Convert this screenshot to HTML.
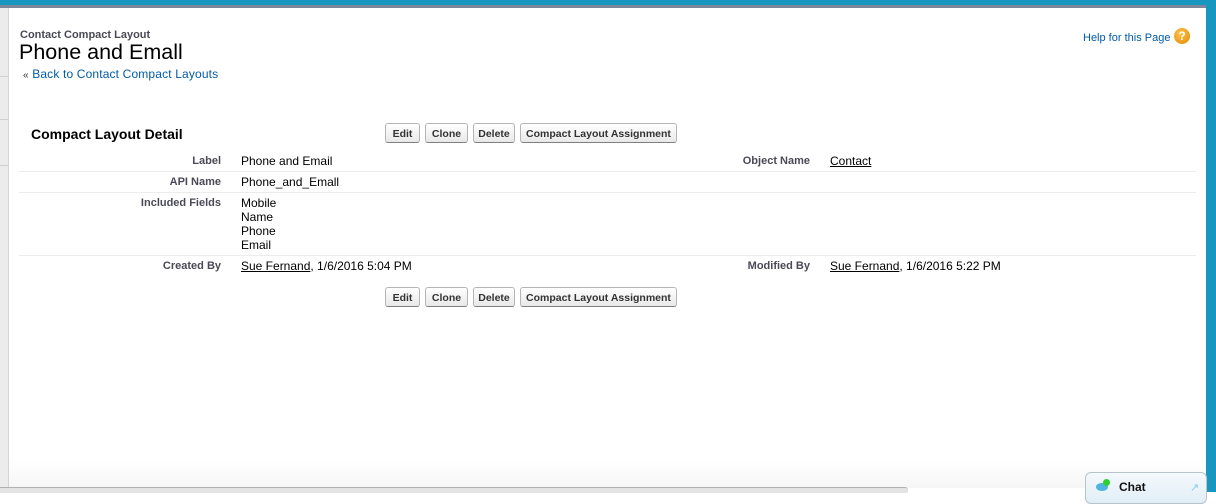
<!DOCTYPE html>
<html><head><style>
body{margin:0;width:1216px;height:492px;position:relative;overflow:hidden;background:#fff;font-family:"Liberation Sans",Arial,sans-serif;}
.a{position:absolute;white-space:nowrap}
.lab{position:absolute;font-size:11px;font-weight:bold;color:#4a4a56;text-align:right;width:200px}
.val{position:absolute;font-size:12px;color:#000}
.btn{position:absolute;height:20px;border:1px solid #b5b5b5;border-bottom-color:#7f7f7f;border-radius:3px;background:linear-gradient(#fff,#e8e8e8);font-size:10.5px;font-weight:bold;color:#333;line-height:20px;text-align:center;box-sizing:border-box}
.ln{position:absolute;left:19px;width:1177px;height:1px;background:#ececec}
u{text-decoration:underline}
</style></head><body>
<div class="a" style="left:0;top:0;width:1216px;height:5px;background:#1797c0"></div>
<div class="a" style="left:0;top:5px;width:1206px;height:3px;background:#7d8799"></div>
<div class="a" style="left:1206px;top:0;width:10px;height:492px;background:#1797c0"></div>
<div class="a" style="left:0;top:8px;width:8px;height:480px;background:#ececec;border-right:1px solid #d4d4d4"></div>
<div class="a" style="left:0;top:76px;width:8px;height:1px;background:#d0d0d0"></div>
<div class="a" style="left:0;top:119px;width:8px;height:1px;background:#d0d0d0"></div>
<div class="a" style="left:0;top:165px;width:8px;height:1px;background:#d0d0d0"></div>
<div class="a" style="left:9px;top:460px;width:1197px;height:28px;background:linear-gradient(#fff,#f6f6f6)"></div>
<div class="a" style="left:0;top:487px;width:908px;height:5px;background:#e4e4e4;border-top:1px solid #b0b0b0;border-radius:0 3px 0 0"></div>
<div class="a" style="left:20px;top:29px;font-size:11px;font-weight:bold;color:#4a4a56">Contact Compact Layout</div>
<div class="a" style="left:19px;top:40px;font-size:21.5px;color:#000">Phone and Emall</div>
<div class="a" style="left:23px;top:67px;font-size:12px;color:#015ba7;letter-spacing:0.15px"><span style="color:#333;font-size:10px">«</span> Back to Contact Compact Layouts</div>
<div class="a" style="left:1083px;top:32px;font-size:11px;color:#015ba7">Help for this Page</div>
<div class="a" style="left:1174px;top:28px;width:16px;height:16px;border-radius:50%;background:radial-gradient(circle at 40% 35%,#ffc24a,#e08a00);color:#fff;font-size:12px;font-weight:bold;text-align:center;line-height:16px">?</div>
<div class="a" style="left:31px;top:126px;font-size:14px;font-weight:bold;color:#000">Compact Layout Detail</div>
<div class="btn" style="left:385px;top:123px;width:35px">Edit</div>
<div class="btn" style="left:425px;top:123px;width:43px">Clone</div>
<div class="btn" style="left:473px;top:123px;width:42px">Delete</div>
<div class="btn" style="left:520px;top:123px;width:157px">Compact Layout Assignment</div>
<div class="lab" style="left:21px;top:155px">Label</div>
<div class="val" style="left:241px;top:154px">Phone and Email</div>
<div class="lab" style="left:610px;top:155px">Object Name</div>
<div class="val" style="left:830px;top:154px"><u>Contact</u></div>
<div class="ln" style="top:171px"></div>
<div class="lab" style="left:21px;top:176px">API Name</div>
<div class="val" style="left:241px;top:175px">Phone_and_Emall</div>
<div class="ln" style="top:192px"></div>
<div class="lab" style="left:21px;top:197px">Included Fields</div>
<div class="val" style="left:241px;top:196px;line-height:14px">Mobile<br>Name<br>Phone<br>Email</div>
<div class="ln" style="top:255px"></div>
<div class="lab" style="left:21px;top:260px">Created By</div>
<div class="val" style="left:241px;top:259px"><u>Sue Fernand</u>, 1/6/2016 5:04 PM</div>
<div class="lab" style="left:610px;top:260px">Modified By</div>
<div class="val" style="left:830px;top:259px"><u>Sue Fernand</u>, 1/6/2016 5:22 PM</div>
<div class="btn" style="left:385px;top:287px;width:35px">Edit</div>
<div class="btn" style="left:425px;top:287px;width:43px">Clone</div>
<div class="btn" style="left:473px;top:287px;width:42px">Delete</div>
<div class="btn" style="left:520px;top:287px;width:157px">Compact Layout Assignment</div>
<div class="a" style="left:1085px;top:472px;width:120px;height:30px;border:1px solid #b8c4cc;border-radius:6px;background:linear-gradient(#f4f9fc,#e1eef6)"></div>
<div class="a" style="left:1096px;top:483px;width:12px;height:8px;border-radius:50%;background:#4fb4e0"></div>
<div class="a" style="left:1103px;top:479px;width:7px;height:7px;border-radius:50%;background:#2fcf2f"></div>
<div class="a" style="left:1119px;top:480px;font-size:12px;font-weight:bold;color:#111">Chat</div>
<div class="a" style="left:1190px;top:481px;font-size:11px;color:#8ccbe8">↗</div>
</body></html>
